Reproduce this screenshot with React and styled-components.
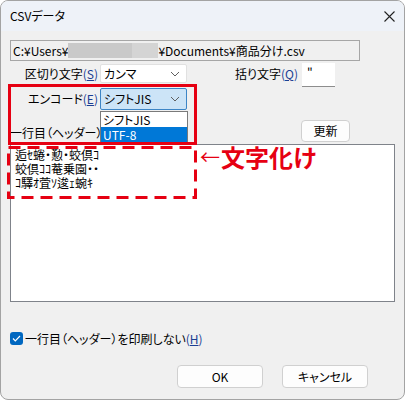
import React from "react";
import styled, { createGlobalStyle } from "styled-components";

const Global = createGlobalStyle`
  html, body { margin: 0; padding: 0; background: #ffffff; }
  body {
    font-family: "Noto Sans CJK JP", "Noto Sans", sans-serif;
    font-size: 12px;
    color: #000;
    font-feature-settings: "palt";
  }
  * { box-sizing: border-box; }
`;

const Window = styled.div`
  position: relative;
  width: 405px;
  height: 400px;
  border: 1px solid #a3a3a3;
  border-radius: 8px;
  background: #f0f0f0;
  overflow: hidden;
  display: flex;
  flex-direction: column;
`;

const TitleBar = styled.div`
  height: 30px;
  flex: none;
  display: flex;
  align-items: center;
  justify-content: space-between;
  padding: 0 9px;
  background: #eef2f8;
`;

const Title = styled.span`
  font-size: 12px;
  line-height: 16px;
`;

const Body = styled.div`
  flex: 1;
  display: flex;
  flex-direction: column;
  padding: 9px 9px 0 9px;
`;

const PathField = styled.div`
  width: 350px;
  height: 21px;
  border: 1px solid #a6a6a6;
  background: #f0f0f0;
  display: flex;
  align-items: center;
  padding-left: 2px;
  white-space: nowrap;
  line-height: 16px;
`;

const Blur = styled.span`
  display: inline-block;
  height: 15px;
  width: ${(p) => p.$w}px;
  background: ${(p) => p.$c};
`;

const Row = styled.div`
  display: flex;
  align-items: flex-start;
  margin-top: ${(p) => p.$mt || 0}px;
  height: ${(p) => p.$h}px;
`;

const Label = styled.span`
  width: ${(p) => p.$w}px;
  flex: none;
  text-align: ${(p) => p.$align || "right"};
  line-height: ${(p) => p.$lh}px;
  margin-top: ${(p) => p.$mt || 0}px;
  padding-right: ${(p) => (p.$align === "left" ? 0 : 2)}px;
  white-space: nowrap;
  overflow: hidden;
`;

const Mn = styled.span`
  color: #1b3f93;
  & u { text-decoration: underline; text-underline-offset: 1px; }
`;

const Combo = styled.div`
  width: 87px;
  height: ${(p) => p.$h}px;
  margin-top: ${(p) => p.$mt || 0}px;
  flex: none;
  display: flex;
  align-items: center;
  justify-content: space-between;
  padding: 0 6px 0 3px;
  background: ${(p) => (p.$focus ? "#cce4f7" : "#ffffff")};
  border: 1px solid ${(p) => (p.$focus ? "#3c85c6" : "#e1e1e1")};
  border-radius: 2px;
  line-height: 16px;
`;

const QInput = styled.div`
  width: 33px;
  height: 24px;
  flex: none;
  margin-left: 2px;
  background: #ffffff;
  border-bottom: 1px solid #8d8d8d;
  padding: 2px 0 0 5px;
  line-height: 14px;
`;

const Button = styled.div`
  width: ${(p) => p.$w}px;
  height: ${(p) => p.$h}px;
  flex: none;
  display: flex;
  align-items: center;
  justify-content: center;
  background: #fdfdfd;
  border: 1px solid #d0d0d0;
  border-radius: 4px;
  margin-left: ${(p) => p.$ml || 0}px;
  line-height: 16px;
`;

const TextArea = styled.div`
  margin-top: 2px;
  width: 385px;
  height: 158px;
  background: #ffffff;
  border: 1px solid #7f838a;
  padding: 3px 4px;
  line-height: 14px;
  white-space: pre;
`;

const CheckRow = styled.div`
  margin-top: 30px;
  display: flex;
  align-items: center;
  gap: 2px;
  height: 13px;
  line-height: 16px;
`;

const Check = styled.span`
  width: 13px;
  height: 13px;
  border-radius: 3px;
  background: #0067c0;
  display: flex;
  align-items: center;
  justify-content: center;
  flex: none;
`;

const ButtonRow = styled.div`
  margin-top: 20px;
  display: flex;
  justify-content: flex-end;
  padding-right: 27px;
`;

const Dropdown = styled.div`
  position: absolute;
  left: 99px;
  top: 110px;
  width: 88px;
  height: 33px;
  background: #ffffff;
  border: 1px solid #7a7a7a;
  display: flex;
  flex-direction: column;
`;

const Item = styled.div`
  height: 15px;
  padding-left: 2px;
  line-height: 15px;
  background: ${(p) => (p.$sel ? "#0078d7" : "#ffffff")};
  color: ${(p) => (p.$sel ? "#ffffff" : "#000000")};
  font-size: 12px;
`;

const RedBox = styled.div`
  position: absolute;
  left: 7px;
  top: 83px;
  width: 189px;
  height: 61px;
  border: 3px solid #e60012;
`;

const DashBox = styled.svg`
  position: absolute;
  left: 5px;
  top: 144px;
`;

const Note = styled.div`
  position: absolute;
  left: 199px;
  top: 141px;
  display: flex;
  align-items: center;
  color: #e60012;
  white-space: nowrap;
`;

const Arrow = styled.span`
  font-size: 20px;
  font-weight: 400;
  line-height: 30px;
  margin-right: 1px;
`;

const NoteText = styled.span`
  font-size: 24px;
  font-weight: 700;
  line-height: 30px;
`;

const Chevron = () => (
  <svg width="10" height="6" viewBox="0 0 10 6">
    <path d="M1 1 L5 5 L9 1" fill="none" stroke="#606060" strokeWidth="1" />
  </svg>
);

export default function App() {
  return (
    <>
      <Global />
      <Window>
        <TitleBar>
          <Title>CSVデータ</Title>
          <svg width="11" height="11" viewBox="0 0 11 11">
            <path d="M0.5 0.5 L10.5 10.5 M10.5 0.5 L0.5 10.5" stroke="#222" strokeWidth="1.1" />
          </svg>
        </TitleBar>
        <Body>
          <PathField>
            <span>C:¥Users¥</span>
            <Blur $w={64} $c="#c9c9c9" />
            <Blur $w={26} $c="#d4d4d4" />
            <span>¥Documents¥商品分け.csv</span>
          </PathField>

          <Row $mt={2} $h={24}>
            <Label $w={90} $lh={19} $mt={1}>
              区切り文字<Mn>(<u>S</u>)</Mn>
            </Label>
            <Combo $h={19} $mt={1}>
              <span>カンマ</span>
              <Chevron />
            </Combo>
            <Label $w={113} $lh={19} $mt={1}>
              括り文字<Mn>(<u>Q</u>)</Mn>
            </Label>
            <QInput>"</QInput>
          </Row>

          <Row $mt={1} $h={22}>
            <Label $w={90} $lh={22}>
              エンコード<Mn>(<u>E</u>)</Mn>
            </Label>
            <Combo $h={22} $focus>
              <span>シフトJIS</span>
              <Chevron />
            </Combo>
          </Row>

          <Row $mt={10} $h={22}>
            <Label $w={90} $lh={22} $mt={2} $align="left">
              一行目（ヘッダー）の内容
            </Label>
            <Button $w={49} $h={22} $ml={201}>更新</Button>
          </Row>

          <TextArea>
            {"逅ｾ蜷・懃・蛟倶ｺ\n蛟倶ｺｺ菴乗園・・\nｺ驛ｵ萓ｿ逡ｪ蜿ｷ"}
          </TextArea>

          <CheckRow>
            <Check>
              <svg width="9" height="7" viewBox="0 0 9 7">
                <path d="M1 3.5 L3.3 5.8 L8 1" fill="none" stroke="#fff" strokeWidth="1.2" />
              </svg>
            </Check>
            <span>
              一行目（ヘッダー）を印刷しない<Mn>(<u>H</u>)</Mn>
            </span>
          </CheckRow>

          <ButtonRow>
            <Button $w={86} $h={23}>OK</Button>
            <Button $w={86} $h={23} $ml={19}>キャンセル</Button>
          </ButtonRow>
        </Body>

        <Dropdown>
          <Item>シフトJIS</Item>
          <Item $sel>UTF-8</Item>
        </Dropdown>

        <RedBox />
        <DashBox width="192" height="55" viewBox="0 0 192 55">
          <rect
            x="2.5"
            y="2.5"
            width="187"
            height="50"
            fill="none"
            stroke="#e60012"
            strokeWidth="3"
            strokeDasharray="12 7"
          />
        </DashBox>
        <Note>
          <Arrow>←</Arrow>
          <NoteText>文字化け</NoteText>
        </Note>
      </Window>
    </>
  );
}
